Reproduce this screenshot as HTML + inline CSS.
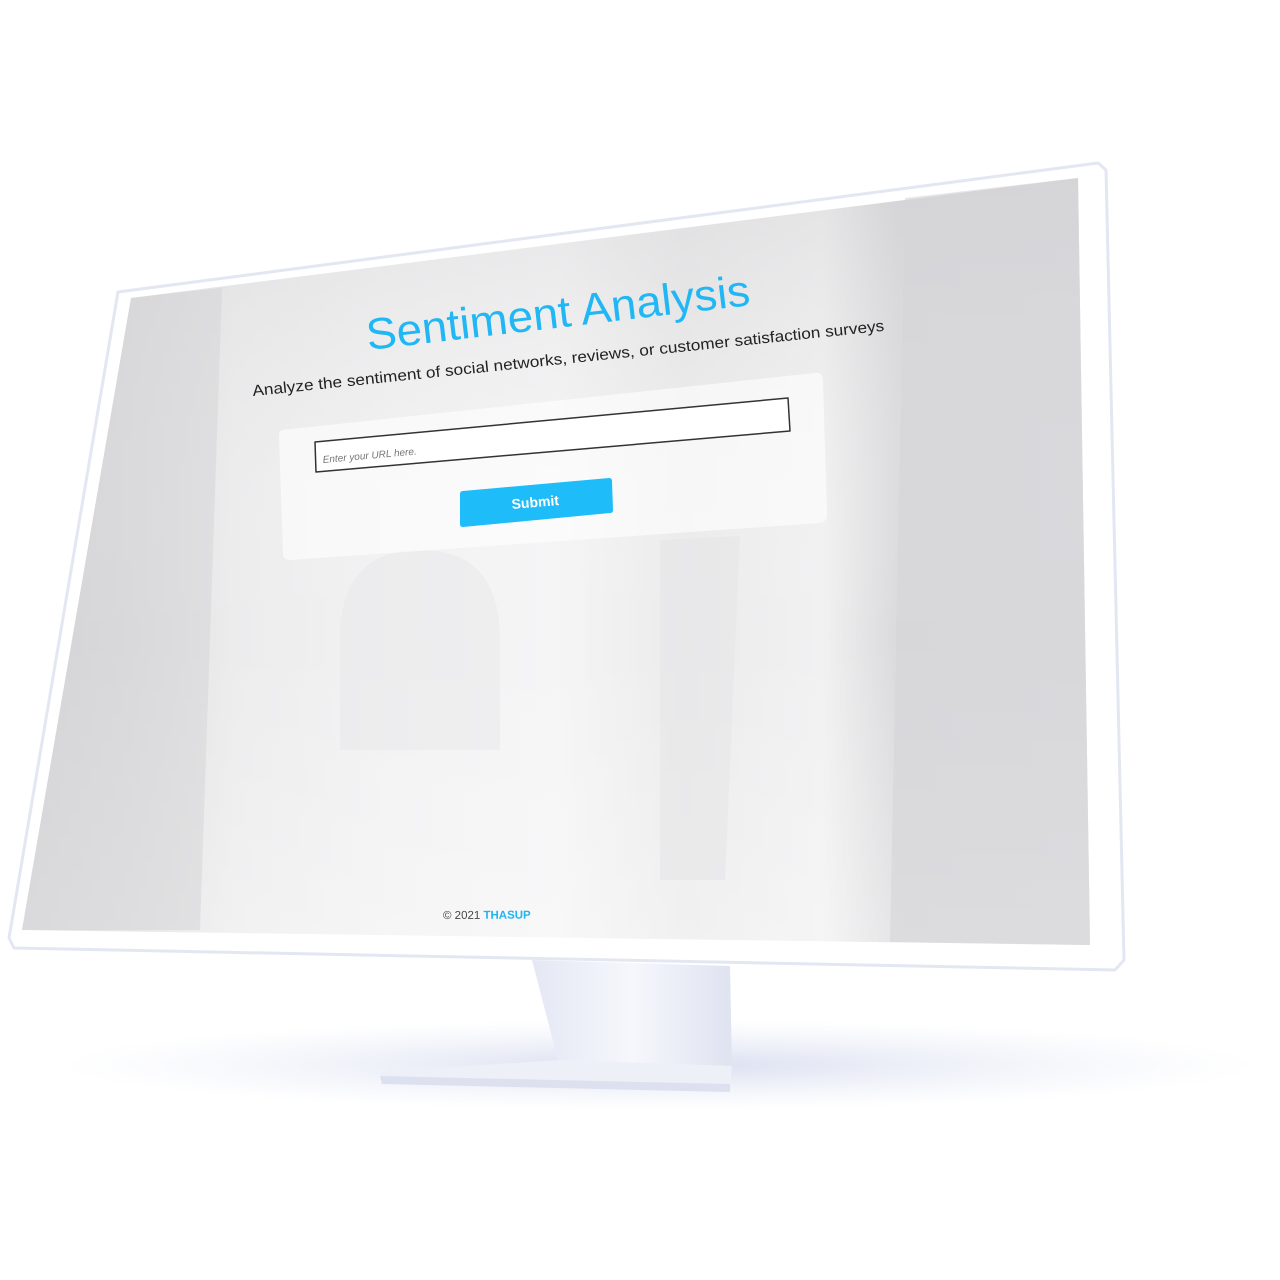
<!DOCTYPE html>
<html><head><meta charset="utf-8"><style>
html,body{margin:0;padding:0;background:#fff;width:1280px;height:1280px;overflow:hidden}
svg{display:block}
text{font-family:"Liberation Sans",sans-serif}
</style></head><body>
<svg width="1280" height="1280" viewBox="0 0 1280 1280">
<defs>
<radialGradient id="sh" cx="0.5" cy="0.5" r="0.5">
<stop offset="0" stop-color="#d5dbee" stop-opacity="0.9"/>
<stop offset="1" stop-color="#e6eaf6" stop-opacity="0"/>
</radialGradient>
<linearGradient id="neck" x1="0" x2="1">
<stop offset="0" stop-color="#e4e8f4"/><stop offset="0.5" stop-color="#f6f7fc"/><stop offset="1" stop-color="#dfe3f0"/>
</linearGradient>
<linearGradient id="bg" x1="0" x2="1">
<stop offset="0" stop-color="#d4d4d6"/>
<stop offset="0.1" stop-color="#dedee0"/>
<stop offset="0.2" stop-color="#ececed"/>
<stop offset="0.35" stop-color="#f2f2f3"/>
<stop offset="0.5" stop-color="#f5f5f6"/>
<stop offset="0.62" stop-color="#ebebec"/>
<stop offset="0.75" stop-color="#f1f1f2"/>
<stop offset="0.82" stop-color="#dadadc"/>
<stop offset="1" stop-color="#dcdcde"/>
</linearGradient>
<linearGradient id="vg" x1="0" y1="0" x2="0" y2="1">
<stop offset="0" stop-color="#c8c8ca" stop-opacity="0.35"/>
<stop offset="0.6" stop-color="#fff" stop-opacity="0"/>
<stop offset="1" stop-color="#fff" stop-opacity="0.3"/>
</linearGradient>
</defs>
<ellipse cx="660" cy="1065" rx="600" ry="45" fill="url(#sh)"/>
<polygon points="532,960 730,966 732,1070 560,1068" fill="url(#neck)"/>
<polygon points="560,1060 732,1066 730,1090 382,1082 380,1072" fill="#eef0f8"/>
<polygon points="380,1076 730,1084 730,1092 382,1084" fill="#dde1ef"/>
<polygon points="118,292 1098,163 1106,170 1124,960 1115,970 14,948 9,938" fill="#fff" stroke="#e3e7f2" stroke-width="3" stroke-linejoin="round"/>
<polygon points="131,298 1078,178 1090,945 22,930" fill="url(#bg)"/>
<polygon points="131,298 1078,178 1090,945 22,930" fill="url(#vg)"/>
<polygon points="905,198 1078,178 1090,945 890,942" fill="#d6d6d8" opacity="0.6"/>
<polygon points="131,298 222,288 200,930 22,930" fill="#d3d3d5" opacity="0.5"/>
<polygon points="660,540 740,536 725,880 660,880" fill="#e6e6e8" opacity="0.6"/>
<path d="M340,750 L340,640 Q340,550 420,550 Q500,550 500,640 L500,750 Z" fill="#e8e8ea" opacity="0.5"/>
<path d="M282,430 L815,373 Q822,372 823,380 L827,515 Q827,522 820,523 L290,560 Q283,560 283,553 L279,437 Q279,431 282,430 Z" fill="#ffffff" opacity="0.6"/>
<polygon points="315,442 788,398 790,431 316,472" fill="#fff" stroke="#333" stroke-width="1.5" stroke-linejoin="round"/>
<path d="M463,491 L609,478 Q612,478 612,481 L613,510 Q613,513 610,513 L463,527 Q460,527 460,524 L460,494 Q460,491 463,491 Z" fill="#1fbcfa"/>
<text transform="translate(323,463) rotate(-5.2)" font-size="10" fill="#777" font-style="italic">Enter your URL here.</text>
<text transform="translate(512,509) rotate(-4.8)" font-size="14" fill="#fff" font-weight="bold">Submit</text>
<text transform="translate(368,350) rotate(-6.7)" font-size="44" fill="#21b7f5" textLength="386" lengthAdjust="spacingAndGlyphs">Sentiment Analysis</text>
<text transform="translate(253,396) rotate(-5.9)" font-size="15.5" fill="#222" textLength="635" lengthAdjust="spacingAndGlyphs">Analyze the sentiment of social networks, reviews, or customer satisfaction surveys</text>
<text transform="translate(443,919) rotate(-0.3)" font-size="11.5" fill="#444">© 2021 <tspan fill="#1fb4f2" font-weight="bold">THASUP</tspan></text>
</svg>
</body></html>
